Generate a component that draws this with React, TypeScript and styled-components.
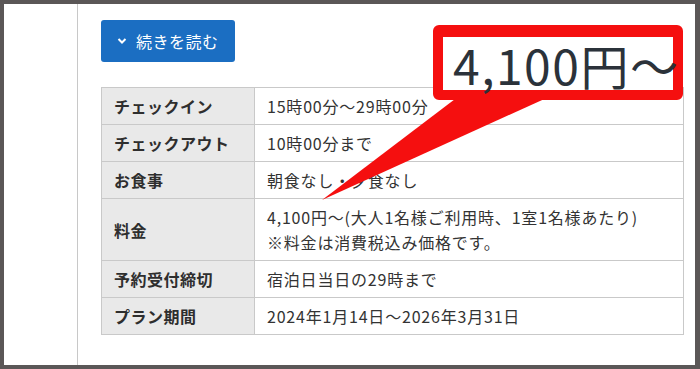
import React from 'react';
import styled, { createGlobalStyle } from 'styled-components';

const GlobalStyle = createGlobalStyle`
  html, body {
    margin: 0;
    padding: 0;
    background: #ffffff;
  }
  body {
    font-family: "Noto Sans CJK JP", "Noto Sans", sans-serif;
    color: #333333;
  }
`;

const Frame = styled.div`
  position: relative;
  box-sizing: border-box;
  width: 700px;
  height: 369px;
  border-style: solid;
  border-color: #5b5757;
  border-width: 4px 5px 4px 4px;
  background: #ffffff;
  display: flex;
  overflow: hidden;
`;

const Gutter = styled.div`
  width: 73px;
  flex-shrink: 0;
  border-right: 1px solid #c8c8c8;
`;

const Content = styled.div`
  flex-grow: 1;
  padding: 16px 0 0 23px;
  display: flex;
  flex-direction: column;
  align-items: flex-start;
`;

const ReadMoreButton = styled.button`
  display: inline-flex;
  align-items: center;
  gap: 9px;
  height: 42px;
  width: 134px;
  padding: 0 0 0 16px;
  border: none;
  border-radius: 3px;
  background: #1b6ec2;
  color: #ffffff;
  font-family: "Noto Sans CJK JP", sans-serif;
  font-size: 16px;
  letter-spacing: 0.5px;
  cursor: pointer;
`;

const PlanTable = styled.table`
  margin-top: 25px;
  width: 583px;
  border-collapse: collapse;
  font-size: 16px;
  line-height: 25px;
`;

const HeadCell = styled.th`
  width: 128px;
  padding: 6px 12px 5px;
  border: 1px solid #c9c9c9;
  background: #e9e9e9;
  text-align: left;
  font-weight: 700;
  letter-spacing: 0.5px;
  color: #2e2e2e;
`;

const ValueCell = styled.td`
  padding: 6px 12px 5px;
  border: 1px solid #c9c9c9;
  letter-spacing: 0.8px;
  color: #333333;
`;

const Callout = styled.div`
  position: absolute;
  left: 429px;
  top: 21px;
  width: 250px;
  height: 75px;
  box-sizing: border-box;
  border: 10px solid #f50f0f;
  border-top-width: 12px;
  border-radius: 6px;
  background: #ffffff;
  display: flex;
  align-items: center;
  padding-left: 10px;
`;

const CalloutPrice = styled.span`
  font-family: "Noto Sans CJK JP", "Noto Sans", sans-serif;
  font-size: 48px;
  line-height: 1;
  color: #2b323a;
  white-space: nowrap;
  letter-spacing: 1.5px;
`;

const CalloutTail = styled.svg`
  position: absolute;
  left: 0;
  top: 0;
  pointer-events: none;
`;

const rows: { label: string; lines: string[] }[] = [
  { label: 'チェックイン', lines: ['15時00分～29時00分'] },
  { label: 'チェックアウト', lines: ['10時00分まで'] },
  { label: 'お食事', lines: ['朝食なし・夕食なし'] },
  { label: '料金', lines: ['4,100円～(大人1名様ご利用時、1室1名様あたり)', '※料金は消費税込み価格です。'] },
  { label: '予約受付締切', lines: ['宿泊日当日の29時まで'] },
  { label: 'プラン期間', lines: ['2024年1月14日～2026年3月31日'] },
];

const Chevron = (): React.ReactElement => (
  <svg width="10" height="8" viewBox="0 0 10 8">
    <polyline points="1.5,2 5,5.5 8.5,2" fill="none" stroke="#ffffff" strokeWidth="2" />
  </svg>
);

export default function App(): React.ReactElement {
  return (
    <>
      <GlobalStyle />
      <Frame>
        <Gutter />
        <Content>
          <ReadMoreButton>
            <Chevron />
            続きを読む
          </ReadMoreButton>
          <PlanTable>
            <tbody>
              {rows.map((row) => (
                <tr key={row.label}>
                  <HeadCell>{row.label}</HeadCell>
                  <ValueCell>
                    {row.lines.map((line, i) => (
                      <div key={i}>{line}</div>
                    ))}
                  </ValueCell>
                </tr>
              ))}
            </tbody>
          </PlanTable>
        </Content>
        <CalloutTail width="700" height="369" viewBox="0 0 700 369">
          <polygon points="455,92 547,92 318,196" fill="#f50f0f" />
        </CalloutTail>
        <Callout>
          <CalloutPrice>4,100円～</CalloutPrice>
        </Callout>
      </Frame>
    </>
  );
}
